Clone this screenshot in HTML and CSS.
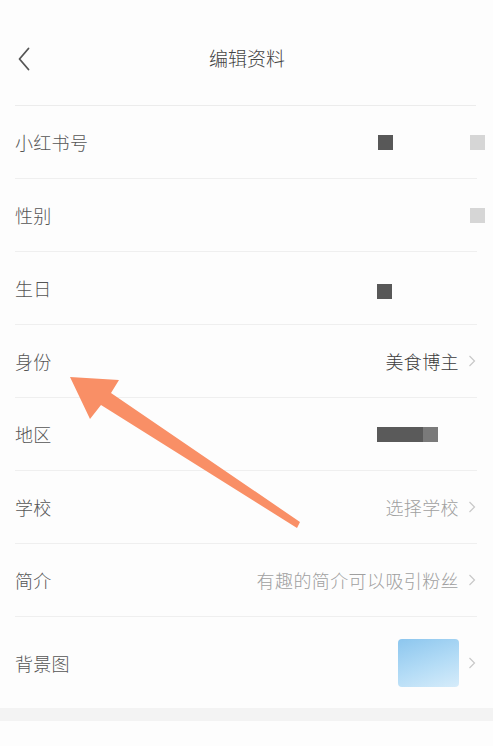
FILE: index.html
```html
<!DOCTYPE html>
<html lang="zh">
<head>
<meta charset="utf-8">
<link rel="stylesheet" href="styles.css">
</head>
<body>
<div class="page">
  <header class="header">
    <svg class="back" width="12" height="24" viewBox="0 0 12 24"><path d="M10.5 1.5 L1.5 12 L10.5 22.5" fill="none" stroke="#555" stroke-width="1.8" stroke-linecap="round" stroke-linejoin="round"/></svg>
    <div class="title">编辑资料</div>
  </header>
  <div class="list">
    <div class="row">
      <span class="label">小红书号</span>
      <div class="right">
        <span class="sq dark sq-id"></span>
        <span class="sq light sq-edge"></span>
      </div>
    </div>
    <div class="row">
      <span class="label">性别</span>
      <div class="right">
        <span class="sq light sq-edge"></span>
      </div>
    </div>
    <div class="row">
      <span class="label">生日</span>
      <div class="right">
        <span class="sq dark sq-bday"></span>
      </div>
    </div>
    <div class="row">
      <span class="label">身份</span>
      <div class="right">
        <span class="value">美食博主</span>
        <svg class="chev" width="8" height="12" viewBox="0 0 8 12"><path d="M1.5 1 L6.5 6 L1.5 11" fill="none" stroke="#c8c8c8" stroke-width="1.2"/></svg>
      </div>
    </div>
    <div class="row">
      <span class="label">地区</span>
      <div class="right">
        <span class="bar"></span>
      </div>
    </div>
    <div class="row">
      <span class="label">学校</span>
      <div class="right">
        <span class="value muted">选择学校</span>
        <svg class="chev" width="8" height="12" viewBox="0 0 8 12"><path d="M1.5 1 L6.5 6 L1.5 11" fill="none" stroke="#c8c8c8" stroke-width="1.2"/></svg>
      </div>
    </div>
    <div class="row">
      <span class="label">简介</span>
      <div class="right">
        <span class="value muted">有趣的简介可以吸引粉丝</span>
        <svg class="chev" width="8" height="12" viewBox="0 0 8 12"><path d="M1.5 1 L6.5 6 L1.5 11" fill="none" stroke="#c8c8c8" stroke-width="1.2"/></svg>
      </div>
    </div>
    <div class="row row-last">
      <span class="label">背景图</span>
      <div class="right">
        <span class="thumb"></span>
        <svg class="chev" width="8" height="12" viewBox="0 0 8 12"><path d="M1.5 1 L6.5 6 L1.5 11" fill="none" stroke="#c8c8c8" stroke-width="1.2"/></svg>
      </div>
    </div>
  </div>
  <div class="band"></div>
  <svg class="arrow" width="493" height="746" viewBox="0 0 493 746">
    <polygon points="70,377 119,380 111,393 300,522 297,528 101,405 90,419" fill="#f98f66"/>
  </svg>
</div>
</body>
</html>
```

FILE: styles.css
```css
html, body {
  margin: 0;
  padding: 0;
  background: #fdfdfd;
}
body {
  font-family: "Noto Sans CJK SC", "Noto Sans", sans-serif;
}
.page {
  position: relative;
  width: 493px;
  height: 746px;
  overflow: hidden;
  background: #fdfdfd;
}
.header {
  height: 89px;
  padding-top: 16px;
  margin: 0 17px 0 15px;
  border-bottom: 1px solid #ececec;
  display: flex;
  align-items: center;
  position: relative;
  box-sizing: content-box;
}
.back {
  margin-left: 3px;
  margin-top: -3px;
}
.title {
  position: absolute;
  left: 0;
  right: 0;
  top: 13px;
  height: 89px;
  display: flex;
  align-items: center;
  justify-content: center;
  font-size: 19px;
  font-weight: 300;
  color: #444;
  pointer-events: none;
  margin-left: 3px;
}
.list {
  margin: 0 16px 0 15px;
}
.row {
  height: 72px;
  border-bottom: 1px solid #efefef;
  display: flex;
  align-items: center;
  justify-content: space-between;
}
.row-last {
  height: 91px;
  border-bottom: none;
}
.label {
  font-size: 18px;
  font-weight: 300;
  color: #555;
  letter-spacing: 0.3px;
}
.right {
  display: flex;
  align-items: center;
}
.value {
  font-size: 18px;
  font-weight: 300;
  color: #3a3a3a;
  letter-spacing: 0.4px;
}
.value.muted {
  color: #a0a0a0;
}
.chev {
  margin-left: 9px;
  margin-right: 1px;
}
.sq {
  width: 15px;
  height: 15px;
  display: block;
}
.sq.dark {
  background: #585858;
}
.sq.light {
  background: #d6d6d6;
}
.sq-id {
  margin-right: 77px;
}
.sq-edge {
  margin-right: -8px;
}
.sq-bday {
  margin-right: 85px;
  margin-top: 6px;
}
.bar {
  width: 61px;
  height: 15px;
  margin-right: 39px;
  background: linear-gradient(to right, #5a5a5a 0, #5a5a5a 46px, #7a7a7a 46px, #7a7a7a 100%);
}
.thumb {
  width: 61px;
  height: 48px;
  border-radius: 4px;
  background: linear-gradient(160deg, #8cc6ee 0%, #b4dcf6 55%, #d6ecfa 100%);
}
.band {
  height: 13px;
  background: #f3f3f3;
}
.arrow {
  position: absolute;
  left: 0;
  top: 0;
  pointer-events: none;
}
```
